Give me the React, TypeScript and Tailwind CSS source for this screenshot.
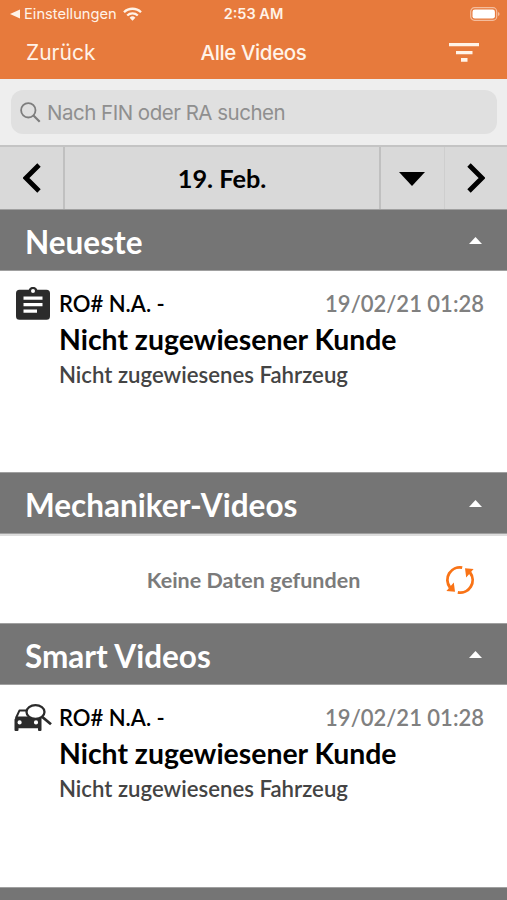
import React from 'react';

interface VideoItem {
  icon: 'order' | 'inspection';
  order: string;
  date: string;
  customer: string;
  vehicle: string;
}

const newest: VideoItem = {
  icon: 'order',
  order: 'RO# N.A. -',
  date: '19/02/21 01:28',
  customer: 'Nicht zugewiesener Kunde',
  vehicle: 'Nicht zugewiesenes Fahrzeug',
};

const smart: VideoItem = { ...newest, icon: 'inspection' };

const ClipboardIcon = () => (
  <svg width="34" height="34" viewBox="0 0 34 34">
    <path
      fill="#2b2b2b"
      fillRule="evenodd"
      d="M3.5 2.8h9.2a4.6 4.6 0 0 1 8.6 0h9.2A3.5 3.5 0 0 1 34 6.3v22.9a3.5 3.5 0 0 1-3.5 3.5h-27A3.5 3.5 0 0 1 0 29.2V6.3A3.5 3.5 0 0 1 3.5 2.8zM17 2.1a2 2 0 1 0 0 4 2 2 0 0 0 0-4zM7.5 9.5v3.3h19V9.5zm0 6.5v3.3h19V16zm0 6.5v3.3h13.5v-3.3z"
    />
  </svg>
);

const CarSearchIcon = () => (
  <svg width="38" height="28" viewBox="0 0 38 28">
    <path d="M2 14 5.4 6.6H15" stroke="#2b2b2b" strokeWidth="2" strokeLinejoin="round" fill="none" />
    <path
      fill="#2b2b2b"
      fillRule="evenodd"
      d="M2 12.5h25.5V26q0 1-1 1H25q-1 0-1-1v-1.8H4.5V26q0 1-1 1H1.5q-1 0-1-1V15.5zM5.6 16.3a2.1 2.1 0 1 0 0 4.2 2.1 2.1 0 0 0 0-4.2zM22 16.3a2.1 2.1 0 1 0 0 4.2 2.1 2.1 0 0 0 0-4.2z"
    />
    <ellipse cx="21.5" cy="8" rx="9" ry="6.8" fill="#fff" stroke="#2b2b2b" strokeWidth="2.3" />
    <path d="m28.3 13 8.7 7.3" stroke="#2b2b2b" strokeWidth="2.8" />
  </svg>
);

const RefreshIcon = () => (
  <svg width="30" height="30" viewBox="0 0 30 30">
    <g fill="none" stroke="#f97316" strokeWidth="2.9">
      <path d="M17.2 2.6A12.5 12.5 0 0 0 5 22.5" />
      <path d="M12.8 27.4A12.5 12.5 0 0 0 25 7.5" />
    </g>
    <path fill="#f97316" d="M1.4 26 8.8 17.6 10 26.8zM28.6 4 21.2 12.4 20 3.2z" />
  </svg>
);

const SectionHeader = ({ title }: { title: string }) => (
  <div className="flex h-[62px] shrink-0 items-center justify-between border-y border-[#a0a0a0] bg-[#757575] px-[25px]">
    <h2 className="pt-1 text-[31.5px] leading-9 font-bold text-white">{title}</h2>
    <svg width="13" height="7" viewBox="0 0 13 7" className="mt-px">
      <path d="M6.5 0 13 7H0z" fill="#fff" />
    </svg>
  </div>
);

const VideoRow = ({ item }: { item: VideoItem }) => (
  <div className="flex pt-4">
    {item.icon === 'order' ? (
      <div className="w-[59px] pl-4"><ClipboardIcon /></div>
    ) : (
      <div className="w-[59px] pt-[3px] pl-3.5"><CarSearchIcon /></div>
    )}
    <div className="min-w-0 flex-1 pr-[23px]">
      <div className="flex items-center justify-between text-[22px] leading-[34px] font-semibold">
        <span className="text-black">{item.order}</span>
        <span className="text-[#808080]">{item.date}</span>
      </div>
      <p className="text-[28.4px] leading-[37px] font-bold text-black">{item.customer}</p>
      <p className="pt-px text-[22.2px] leading-8 font-semibold text-[#444]">{item.vehicle}</p>
    </div>
  </div>
);

export default function App() {
  return (
    <div className="flex h-[900px] w-[507px] flex-col overflow-hidden bg-white font-['Lato',sans-serif]">
      <header className="h-[79px] shrink-0 bg-[#e77a3c] font-['Inter',sans-serif] text-[#fff3e8]">
        <div className="grid h-7 grid-cols-3 items-center text-sm">
          <div className="flex items-center pl-2.5">
            <svg width="10" height="10" viewBox="0 0 10 10">
              <path d="M0 5 10 .5v9z" fill="currentColor" />
            </svg>
            <span className="ml-1 text-[14.7px]">Einstellungen</span>
            <svg width="19" height="14" viewBox="0 0 19 14" className="ml-1.5">
              <g fill="none" stroke="currentColor" strokeWidth="2.3">
                <path d="M1 5.2a12.2 12.2 0 0 1 17 0" />
                <path d="M4.2 8.5a7.6 7.6 0 0 1 10.6 0" />
              </g>
              <path d="M9.5 13.8 6.6 10.7a4.2 4.2 0 0 1 5.8 0z" fill="currentColor" />
            </svg>
          </div>
          <span className="text-center text-[14.5px] font-semibold">2:53 AM</span>
          <svg width="30" height="15" viewBox="0 0 30 15" className="mr-[7px] justify-self-end">
            <rect x=".7" y=".7" width="26" height="12.6" rx="3.8" fill="none" stroke="#f4bd9d" strokeWidth="1.2" />
            <rect x="2.5" y="2.5" width="22.4" height="9" rx="2.3" fill="#fff" />
            <path d="M28 5v4q1.6-.5 1.6-2T28 5z" fill="#f4bd9d" />
          </svg>
        </div>
        <div className="grid h-[50px] grid-cols-3 items-center text-[20.5px]">
          <span className="pl-[26px] text-[21px]">Zurück</span>
          <span className="text-center font-medium tracking-[-0.4px]">Alle Videos</span>
          <svg width="30" height="20" viewBox="0 0 30 20" className="mr-7 justify-self-end">
            <path d="M0 0h30v3.3H0zM7 8h16.5v3.3H7zM12 15h6.5v3.7H12z" fill="currentColor" />
          </svg>
        </div>
      </header>

      <div className="h-[66px] shrink-0 bg-[#eee] pt-[11px] pr-2.5 pl-[11px]">
        <div className="flex h-11 items-center rounded-xl bg-[#e0e0e0] pl-[9px] text-[#8f8f8f]">
          <svg width="21" height="21" viewBox="0 0 21 21" fill="none" stroke="#7d7d7d" strokeWidth="1.8">
            <circle cx="8.3" cy="8.3" r="7.2" />
            <path d="m13.5 13.5 6.2 6.2" strokeWidth="2.2" />
          </svg>
          <span className="ml-1.5 pt-0.5 font-['Inter',sans-serif] text-[20.5px] tracking-[-0.5px]">
            Nach FIN oder RA suchen
          </span>
        </div>
      </div>

      <div className="flex h-16 shrink-0 border-t-2 border-[#c4c4c4] bg-[#d9d9d9]">
        <button className="flex w-[63px] items-center justify-center">
          <svg width="18" height="30" viewBox="0 0 18 30">
            <path d="M16 2 3 15l13 13" fill="none" stroke="#000" strokeWidth="4.8" />
          </svg>
        </button>
        <div className="flex w-[318px] items-center justify-center border-x-2 border-[#c0c0c0] pt-0.5 text-[25.3px] font-bold text-black">
          19. Feb.
        </div>
        <button className="flex w-16 items-center justify-center border-r border-[#cecece] pt-0.5 pr-0.5">
          <svg width="26" height="14" viewBox="0 0 26 14">
            <path d="M0 0h26L13 14z" />
          </svg>
        </button>
        <button className="flex flex-1 items-center justify-center">
          <svg width="18" height="30" viewBox="0 0 18 30">
            <path d="m2 2 13 13L2 28" fill="none" stroke="#000" strokeWidth="4.8" />
          </svg>
        </button>
      </div>

      <SectionHeader title="Neueste" />
      <div className="h-[201px] shrink-0">
        <VideoRow item={newest} />
      </div>

      <SectionHeader title="Mechaniker-Videos" />
      <div className="grid h-[89px] shrink-0 grid-cols-[1fr_auto_1fr] items-center border-t-2 border-[#ddd]">
        <span className="col-start-2 pt-0.5 text-[21.5px] font-bold text-[#7b7b7b]">Keine Daten gefunden</span>
        <div className="mr-8 justify-self-end">
          <RefreshIcon />
        </div>
      </div>

      <SectionHeader title="Smart Videos" />
      <div className="h-[202px] shrink-0">
        <VideoRow item={smart} />
      </div>
      <div className="h-[62px] shrink-0 border-t border-[#a0a0a0] bg-[#757575]" />
    </div>
  );
}
